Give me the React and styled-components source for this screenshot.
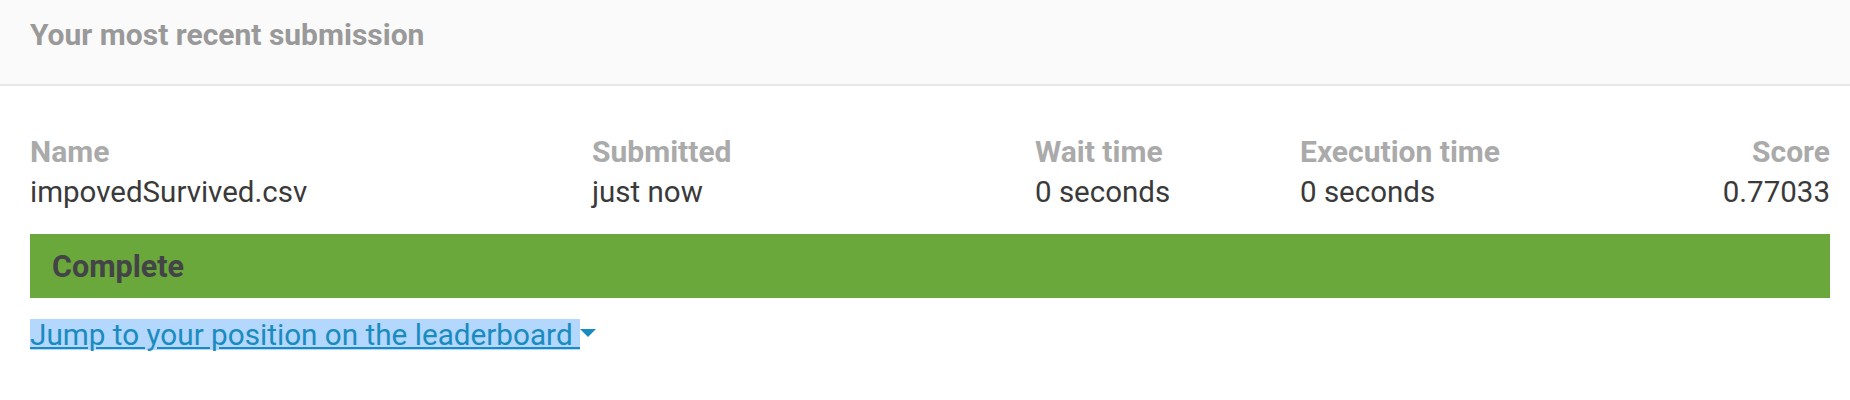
import React from "react";
import styled, { createGlobalStyle } from "styled-components";

const GlobalStyle = createGlobalStyle`
  body {
    margin: 0;
    background: #ffffff;
    font-family: Roboto, "Liberation Sans", Arial, sans-serif;
  }
`;

const columns = [
  { label: "Name", value: "impovedSurvived.csv" },
  { label: "Submitted", value: "just now" },
  { label: "Wait time", value: "0 seconds" },
  { label: "Execution time", value: "0 seconds" },
  { label: "Score", value: "0.77033", right: true },
];

function App() {
  return (
    <Page>
      <GlobalStyle />
      <Header>
        <Title>Your most recent submission</Title>
      </Header>
      <Body>
        <Table>
          {columns.map((col) => (
            <Cell key={col.label} $right={col.right}>
              <Label>{col.label}</Label>
              <Value>{col.value}</Value>
            </Cell>
          ))}
        </Table>
        <StatusBar>Complete</StatusBar>
        <LinkRow>
          <Highlight>
            <JumpLink href="#leaderboard">Jump to your position on the leaderboard </JumpLink>
          </Highlight>
          <Caret />
        </LinkRow>
      </Body>
    </Page>
  );
}

export default App;

const Page = styled.div`
  width: 1850px;
  height: 400px;
  background: #fff;
`;

const Header = styled.div`
  height: 84px;
  background: #fafafa;
  border-bottom: 2px solid #e8e8e8;
  display: flex;
  align-items: center;
  padding: 0 30px;
  box-sizing: content-box;
`;

const Title = styled.h2`
  margin: 0;
  font-size: 30px;
  font-weight: 700;
  color: #999999;
  line-height: 36px;
  padding-bottom: 14px;
`;

const Body = styled.div`
  padding: 48px 20px 0 30px;
`;

const Table = styled.div`
  display: grid;
  grid-template-columns: 562px 443px 265px 1fr auto;
`;

const Cell = styled.div`
  display: flex;
  flex-direction: column;
  align-items: ${(p) => (p.$right ? "flex-end" : "flex-start")};
`;

const Label = styled.span`
  font-size: 30px;
  font-weight: 700;
  color: #aaaaaa;
  line-height: 36px;
`;

const Value = styled.span`
  font-size: 29.5px;
  color: #3a3a3a;
  line-height: 44px;
`;

const StatusBar = styled.div`
  margin-top: 20px;
  height: 64px;
  background: #6aa83b;
  display: flex;
  align-items: center;
  padding-left: 22px;
  font-size: 30.5px;
  font-weight: 700;
  color: #434348;
`;

const LinkRow = styled.div`
  margin-top: 21px;
  display: flex;
  align-items: center;
`;

const Highlight = styled.span`
  background: #b3d7fd;
  height: 31px;
  display: inline-flex;
  align-items: center;
`;

const JumpLink = styled.a`
  font-size: 29.7px;
  color: #1a8bbf;
  text-decoration: underline;
  white-space: pre;
  line-height: 31px;
`;

const Caret = styled.span`
  width: 0;
  height: 0;
  margin-bottom: 4px;
  border-left: 8px solid transparent;
  border-right: 8px solid transparent;
  border-top: 8px solid #1a8bbf;
`;
